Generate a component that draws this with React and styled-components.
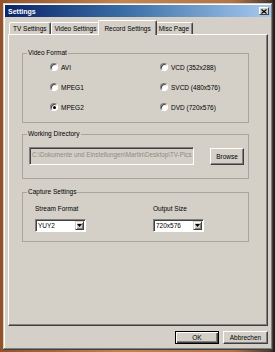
import styled, { createGlobalStyle } from "styled-components";

const GlobalStyle = createGlobalStyle`
  html, body {
    margin: 0;
    padding: 0;
  }
  body {
    width: 275px;
    height: 352px;
    overflow: hidden;
    background: linear-gradient(90deg, #93522a 0%, #c4844f 45%, #b27446 85%, #4a3d32 98%, #1e1a16 100%);
    font-family: "Liberation Sans", Arial, sans-serif;
    color: #000;
  }
`;

const Window = styled.div`
  box-sizing: border-box;
  width: 270px;
  height: 347px;
  margin: 3px 0 0 3px;
  padding: 2px;
  background: #d4d0c8;
  box-shadow: inset -1px -1px #404040, inset 1px 1px #d4d0c8,
    inset -2px -2px #808080, inset 2px 2px #fff;
  display: flex;
  flex-direction: column;
`;

const TitleBar = styled.div`
  height: 12px;
  padding: 0 2px 0 3px;
  display: flex;
  align-items: center;
  justify-content: space-between;
  background: linear-gradient(90deg, #0a246a 0%, #3a6ea5 45%, #a6caf0 100%);
  color: #fff;
  font-size: 7px;
  font-weight: bold;
`;

const CloseButton = styled.div`
  box-sizing: border-box;
  width: 10px;
  height: 8px;
  display: flex;
  align-items: center;
  justify-content: center;
  background: #d4d0c8;
  border: 1px solid;
  border-color: #fff #404040 #404040 #fff;
`;

const Body = styled.div`
  padding: 0 3px;
  display: flex;
  flex-direction: column;
`;

const TabRow = styled.div`
  margin-top: 3px;
  padding-left: 1px;
  height: 14px;
  display: flex;
  align-items: flex-end;
`;

const Tab = styled.div`
  box-sizing: border-box;
  height: ${(p) => (p.$active ? 15 : 12)}px;
  padding: 0 ${(p) => (p.$active ? 5 : 3)}px;
  margin: 0 ${(p) => (p.$active ? -2 : 0)}px ${(p) => (p.$active ? -1 : 0)}px;
  position: relative;
  z-index: ${(p) => (p.$active ? 2 : 0)};
  display: flex;
  align-items: center;
  background: #d4d0c8;
  border-top: 1px solid #fff;
  border-left: 1px solid #fff;
  border-right: 1px solid #404040;
  border-radius: 2px 2px 0 0;
  box-shadow: inset -1px 0 #808080;
  font-size: 6.5px;
  white-space: nowrap;
`;

const Panel = styled.div`
  box-sizing: border-box;
  height: 292px;
  padding: 14px 18px 0 13px;
  border: 1px solid;
  border-color: #fff #404040 #404040 #fff;
  box-shadow: inset -1px -1px #808080;
  display: flex;
  flex-direction: column;
  gap: 7px;
`;

const Group = styled.fieldset`
  box-sizing: border-box;
  margin: 0;
  margin-top: ${(p) => p.$top || 0}px;
  padding: 0;
  height: ${(p) => p.$height}px;
  border: 1px solid #a9a59e;
  font-size: 6.5px;
`;

const Legend = styled.legend`
  margin-left: 4px;
  padding: 0 1px;
  line-height: 8px;
  font-size: 6.5px;
`;

const GroupContent = styled.div`
  padding: ${(p) => p.$pad};
`;

const RadioGrid = styled.div`
  display: grid;
  grid-template-columns: 110px 1fr;
  grid-auto-rows: 20px;
`;

const RadioItem = styled.label`
  display: flex;
  align-items: center;
  gap: 3px;
  font-size: 6.5px;
`;

const RadioCircle = styled.span`
  box-sizing: border-box;
  width: 8px;
  height: 8px;
  border-radius: 50%;
  background: #fff;
  border: 1px solid;
  border-color: #808080 #fff #fff #808080;
  box-shadow: inset 1px 1px #404040;
  display: flex;
  align-items: center;
  justify-content: center;

  &::after {
    content: "";
    width: 3px;
    height: 3px;
    border-radius: 50%;
    background: ${(p) => (p.$checked ? "#000" : "transparent")};
  }
`;

const DirRow = styled.div`
  display: flex;
  align-items: center;
  gap: 16px;
`;

const TextBox = styled.div`
  box-sizing: border-box;
  width: 165px;
  height: 18px;
  padding: 3px 2px;
  border: 1px solid;
  border-color: #808080 #fff #fff #808080;
  box-shadow: inset 1px 1px #404040;
  color: #8d8a85;
  font-size: 6.3px;
  white-space: nowrap;
  overflow: hidden;
`;

const Button = styled.button`
  box-sizing: border-box;
  width: ${(p) => p.$width}px;
  height: ${(p) => p.$height || 13}px;
  padding: 0;
  background: #d4d0c8;
  border: 1px solid;
  border-color: ${(p) => (p.$default ? "#000" : "#fff #404040 #404040 #fff")};
  box-shadow: ${(p) =>
    p.$default
      ? "inset 1px 1px #fff, inset -1px -1px #404040, inset -2px -2px #808080"
      : "inset -1px -1px #808080"};
  font-family: inherit;
  font-size: 6.5px;
  color: #000;
`;

const CaptureGrid = styled.div`
  display: grid;
  grid-template-columns: 118px 1fr;
  row-gap: 6px;
  font-size: 6.5px;
`;

const FieldLabel = styled.div`
  line-height: 8px;
`;

const Select = styled.div`
  box-sizing: border-box;
  width: 51px;
  height: 13px;
  display: flex;
  align-items: center;
  background: #fff;
  border: 1px solid;
  border-color: #808080 #fff #fff #808080;
  box-shadow: inset 1px 1px #404040;
  padding: 1px;
`;

const SelectValue = styled.span`
  flex: 1;
  padding-left: 1px;
  font-size: 6.5px;
`;

const DropButton = styled.span`
  box-sizing: border-box;
  width: 9px;
  height: 9px;
  display: flex;
  align-items: center;
  justify-content: center;
  background: #d4d0c8;
  border: 1px solid;
  border-color: #d4d0c8 #404040 #404040 #d4d0c8;
  box-shadow: inset 1px 1px #fff, inset -1px -1px #808080;
`;

const Footer = styled.div`
  margin-top: 5px;
  display: flex;
  justify-content: flex-end;
  gap: 4px;
`;

function Radio({ label, checked }) {
  return (
    <RadioItem>
      <RadioCircle $checked={checked} />
      {label}
    </RadioItem>
  );
}

function Dropdown({ value }) {
  return (
    <Select>
      <SelectValue>{value}</SelectValue>
      <DropButton>
        <svg width="5" height="3" viewBox="0 0 5 3">
          <path d="M0 0h5L2.5 3z" fill="#000" />
        </svg>
      </DropButton>
    </Select>
  );
}

export default function App() {
  return (
    <>
      <GlobalStyle />
      <Window>
        <TitleBar>
          Settings
          <CloseButton>
            <svg width="6" height="5" viewBox="0 0 6 5">
              <path d="M0.5 0.5L5.5 4.5M5.5 0.5L0.5 4.5" stroke="#000" strokeWidth="1.2" />
            </svg>
          </CloseButton>
        </TitleBar>
        <Body>
          <TabRow>
            <Tab>TV Settings</Tab>
            <Tab>Video Settings</Tab>
            <Tab $active>Record Settings</Tab>
            <Tab>Misc Page</Tab>
          </TabRow>
          <Panel>
            <Group $height={74}>
              <Legend>Video Format</Legend>
              <GroupContent $pad="0 0 0 27px">
                <RadioGrid>
                  <Radio label="AVI" />
                  <Radio label="VCD (352x288)" />
                  <Radio label="MPEG1" />
                  <Radio label="SVCD (480x576)" />
                  <Radio label="MPEG2" checked />
                  <Radio label="DVD (720x576)" />
                </RadioGrid>
              </GroupContent>
            </Group>
            <Group $height={49}>
              <Legend>Working Directory</Legend>
              <GroupContent $pad="9px 0 0 6px">
                <DirRow>
                  <TextBox>C:\Dokumente und Einstellungen\Martin\Desktop\TV-Pics</TextBox>
                  <Button $width={34} $height={17}>Browse</Button>
                </DirRow>
              </GroupContent>
            </Group>
            <Group $top={2} $height={54}>
              <Legend>Capture Settings</Legend>
              <GroupContent $pad="9px 0 0 12px">
                <CaptureGrid>
                  <FieldLabel>Stream Format</FieldLabel>
                  <FieldLabel>Output Size</FieldLabel>
                  <Dropdown value="YUY2" />
                  <Dropdown value="720x576" />
                </CaptureGrid>
              </GroupContent>
            </Group>
          </Panel>
          <Footer>
            <Button $width={44} $default>OK</Button>
            <Button $width={45}>Abbrechen</Button>
          </Footer>
        </Body>
      </Window>
    </>
  );
}
